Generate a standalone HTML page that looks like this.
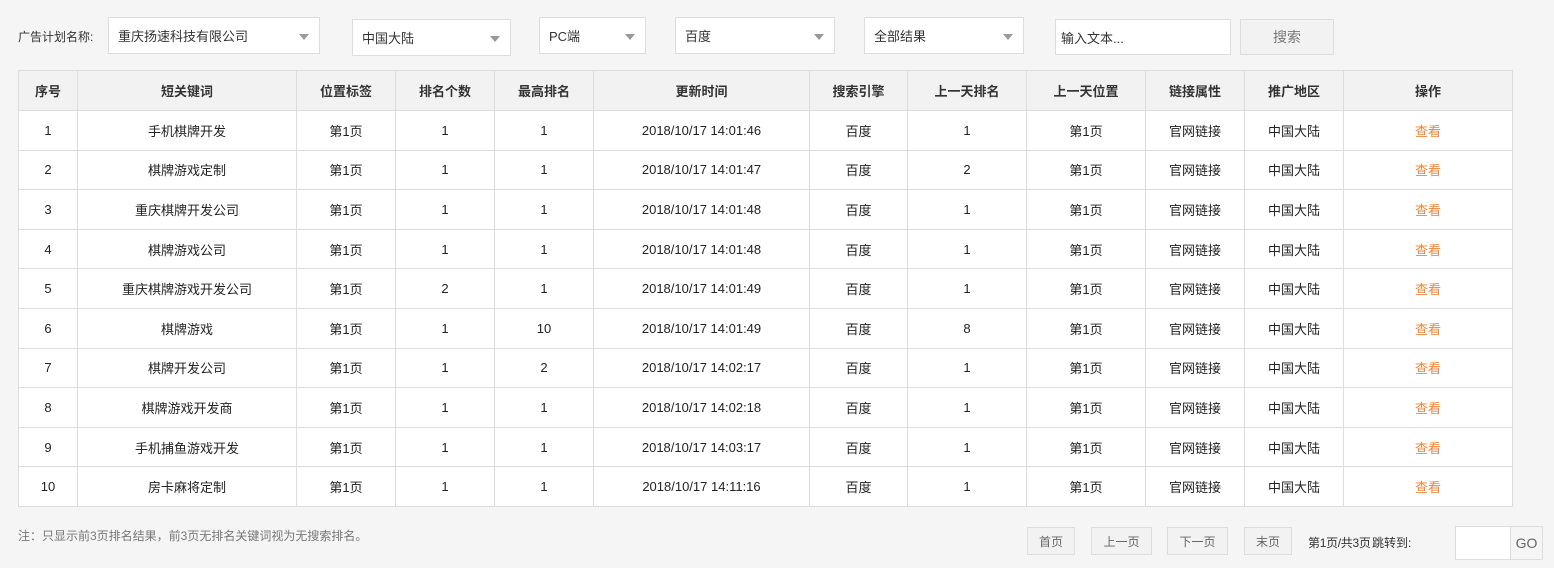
<!DOCTYPE html>
<html><head><meta charset="utf-8"><style>
*{box-sizing:border-box;margin:0;padding:0}
body{width:1554px;height:568px;background:#f5f5f5;font-family:"Liberation Sans","Noto Sans CJK SC",sans-serif;font-size:13px;color:#333;position:relative;overflow:hidden}
.a{position:absolute}
.sel{position:absolute;background:#fff;border:1px solid #ddd;padding-left:9px;display:flex;align-items:center}
.sel.dd:after{content:"";position:absolute;right:10px;top:50%;margin-top:-2px;border-left:5px solid transparent;border-right:5px solid transparent;border-top:6px solid #999}
table{position:absolute;left:18px;top:70px;border-collapse:collapse;background:#fff;table-layout:fixed}
td,th{border:1px solid #ddd;height:39.6px;text-align:center;font-size:13px;padding:0;color:#222}
th{background:#f2f2f2;font-weight:bold;color:#333;height:40px}
td.o{color:#f08437}
.btn{position:absolute;border:1px solid #ddd;background:#f2f2f2;color:#666;display:flex;align-items:center;justify-content:center;font-size:12px}
</style></head><body>
<div class="a" style="left:18px;top:28px;font-size:12px">广告计划名称:</div>
<div class="sel dd" style="left:108px;top:17px;width:212px;height:37px">重庆扬速科技有限公司</div>
<div class="sel dd" style="left:352px;top:19px;width:159px;height:37px">中国大陆</div>
<div class="sel dd" style="left:539px;top:17px;width:107px;height:37px">PC端</div>
<div class="sel dd" style="left:675px;top:17px;width:160px;height:37px">百度</div>
<div class="sel dd" style="left:864px;top:17px;width:160px;height:37px">全部结果</div>
<div class="sel" style="left:1055px;top:19px;width:176px;height:36px;padding-left:5px">输入文本...</div>
<div class="btn" style="left:1240px;top:19px;width:94px;height:36px;font-size:14px;color:#777">搜索</div>
<table>
<colgroup><col style="width:59px"><col style="width:219px"><col style="width:99px"><col style="width:99px"><col style="width:99px"><col style="width:216px"><col style="width:98px"><col style="width:119px"><col style="width:119px"><col style="width:99px"><col style="width:99px"><col style="width:169px"></colgroup>
<tr><th>序号</th><th>短关键词</th><th>位置标签</th><th>排名个数</th><th>最高排名</th><th>更新时间</th><th>搜索引擎</th><th>上一天排名</th><th>上一天位置</th><th>链接属性</th><th>推广地区</th><th>操作</th></tr>
<tr><td>1</td><td>手机棋牌开发</td><td>第1页</td><td>1</td><td>1</td><td>2018/10/17 14:01:46</td><td>百度</td><td>1</td><td>第1页</td><td>官网链接</td><td>中国大陆</td><td class="o">查看</td></tr>
<tr><td>2</td><td>棋牌游戏定制</td><td>第1页</td><td>1</td><td>1</td><td>2018/10/17 14:01:47</td><td>百度</td><td>2</td><td>第1页</td><td>官网链接</td><td>中国大陆</td><td class="o">查看</td></tr>
<tr><td>3</td><td>重庆棋牌开发公司</td><td>第1页</td><td>1</td><td>1</td><td>2018/10/17 14:01:48</td><td>百度</td><td>1</td><td>第1页</td><td>官网链接</td><td>中国大陆</td><td class="o">查看</td></tr>
<tr><td>4</td><td>棋牌游戏公司</td><td>第1页</td><td>1</td><td>1</td><td>2018/10/17 14:01:48</td><td>百度</td><td>1</td><td>第1页</td><td>官网链接</td><td>中国大陆</td><td class="o">查看</td></tr>
<tr><td>5</td><td>重庆棋牌游戏开发公司</td><td>第1页</td><td>2</td><td>1</td><td>2018/10/17 14:01:49</td><td>百度</td><td>1</td><td>第1页</td><td>官网链接</td><td>中国大陆</td><td class="o">查看</td></tr>
<tr><td>6</td><td>棋牌游戏</td><td>第1页</td><td>1</td><td>10</td><td>2018/10/17 14:01:49</td><td>百度</td><td>8</td><td>第1页</td><td>官网链接</td><td>中国大陆</td><td class="o">查看</td></tr>
<tr><td>7</td><td>棋牌开发公司</td><td>第1页</td><td>1</td><td>2</td><td>2018/10/17 14:02:17</td><td>百度</td><td>1</td><td>第1页</td><td>官网链接</td><td>中国大陆</td><td class="o">查看</td></tr>
<tr><td>8</td><td>棋牌游戏开发商</td><td>第1页</td><td>1</td><td>1</td><td>2018/10/17 14:02:18</td><td>百度</td><td>1</td><td>第1页</td><td>官网链接</td><td>中国大陆</td><td class="o">查看</td></tr>
<tr><td>9</td><td>手机捕鱼游戏开发</td><td>第1页</td><td>1</td><td>1</td><td>2018/10/17 14:03:17</td><td>百度</td><td>1</td><td>第1页</td><td>官网链接</td><td>中国大陆</td><td class="o">查看</td></tr>
<tr><td>10</td><td>房卡麻将定制</td><td>第1页</td><td>1</td><td>1</td><td>2018/10/17 14:11:16</td><td>百度</td><td>1</td><td>第1页</td><td>官网链接</td><td>中国大陆</td><td class="o">查看</td></tr>
</table>
<div class="a" style="left:18px;top:527px;color:#777;font-size:12px">注：只显示前3页排名结果，前3页无排名关键词视为无搜索排名。</div>
<div class="btn" style="left:1027px;top:527px;width:48px;height:28px">首页</div>
<div class="btn" style="left:1091px;top:527px;width:61px;height:28px">上一页</div>
<div class="btn" style="left:1167px;top:527px;width:61px;height:28px">下一页</div>
<div class="btn" style="left:1244px;top:527px;width:48px;height:28px">末页</div>
<div class="a" style="left:1308px;top:534px;font-size:12px;letter-spacing:-0.3px">第1页/共3页</div>
<div class="a" style="left:1372px;top:534px;font-size:12px">跳转到:</div>
<div class="a" style="left:1455px;top:526px;width:56px;height:34px;background:#fff;border:1px solid #ddd"></div>
<div class="btn" style="left:1510px;top:526px;width:33px;height:34px;background:#f5f5f5;font-size:14px">GO</div>
</body></html>
